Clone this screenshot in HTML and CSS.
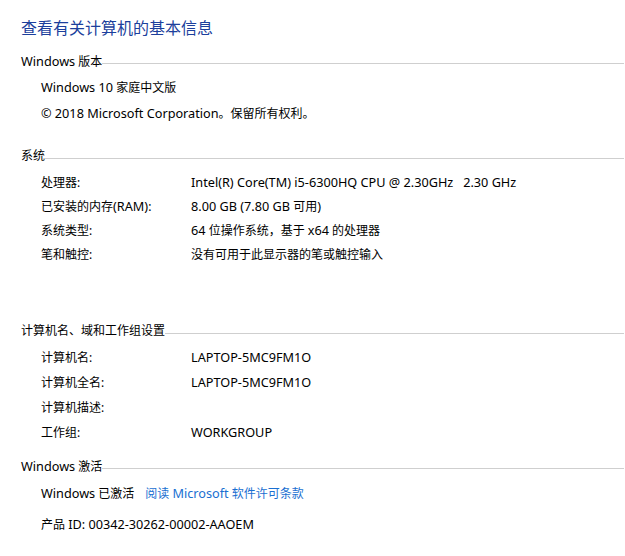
FILE: index.html
```html
<!DOCTYPE html>
<html>
<head>
	<meta charset="utf-8">
	<title>系统</title>
	<link rel="stylesheet" href="styles.css">
</head>
<body>

	<main class="sys-wrapper">
		<h1 class="sys-title">查看有关计算机的基本信息</h1>

		<section class="sys-section sec-edition">
			<div class="sec-head"><span><span class="en">Windows</span> 版本</span><i class="sec-line"></i></div>
			<div class="sec-rows">
				<div class="row"><span class="en">Windows 10</span>&nbsp;家庭中文版</div>
				<div class="row"><span class="en">© 2018 Microsoft Corporation</span>。保留所有权利。</div>
			</div>
		</section>

		<section class="sys-section sec-system">
			<div class="sec-head"><span>系统</span><i class="sec-line"></i></div>
			<div class="sec-rows">
				<div class="row"><span class="lbl">处理器:</span><span class="val en">Intel(R) Core(TM) i5-6300HQ CPU @ 2.30GHz&nbsp;&nbsp;&nbsp;2.30 GHz</span></div>
				<div class="row"><span class="lbl">已安装的内存<span class="en">(RAM)</span>:</span><span class="val"><span class="en">8.00 GB (7.80 GB</span> 可用<span class="en">)</span></span></div>
				<div class="row"><span class="lbl">系统类型:</span><span class="val"><span class="en">64</span> 位操作系统，基于 <span class="en">x64</span> 的处理器</span></div>
				<div class="row"><span class="lbl">笔和触控:</span><span class="val">没有可用于此显示器的笔或触控输入</span></div>
			</div>
		</section>

		<section class="sys-section sec-name">
			<div class="sec-head"><span>计算机名、域和工作组设置</span><i class="sec-line"></i></div>
			<div class="sec-rows">
				<div class="row"><span class="lbl">计算机名:</span><span class="val en">LAPTOP-5MC9FM1O</span></div>
				<div class="row"><span class="lbl">计算机全名:</span><span class="val en">LAPTOP-5MC9FM1O</span></div>
				<div class="row"><span class="lbl">计算机描述:</span><span class="val"></span></div>
				<div class="row"><span class="lbl">工作组:</span><span class="val en">WORKGROUP</span></div>
			</div>
		</section>

		<section class="sys-section sec-activation">
			<div class="sec-head"><span><span class="en">Windows</span> 激活</span><i class="sec-line"></i></div>
			<div class="sec-rows">
				<div class="row"><span class="en">Windows</span>&nbsp;已激活<a class="link" href="#">阅读 <span class="en">Microsoft</span> 软件许可条款</a></div>
				<div class="row row-id">产品&nbsp;<span class="en">ID: 00342-30262-00002-AAOEM</span></div>
			</div>
		</section>
	</main>

</body>
</html>
```

FILE: styles.css
```css
*{
	margin: 0;
	padding: 0;
	box-sizing: border-box;
}
body{
	background: #fff;
	color: #000;
	font-family: "Segoe UI", "Noto Sans", "Noto Sans CJK SC", sans-serif;
	font-size: 12px;
}
/* latin runs: Segoe UI is a bit wider than Noto Sans */
.en{
	font-size: 12.7px;
}
.sys-wrapper{
	padding: 17px 1px 0 21px;
}
.sys-title{
	font-size: 16px;
	font-weight: normal;
	line-height: 22px;
	color: #1c3f9c;
}
.sec-head{
	display: flex;
	align-items: center;
	height: 20px;
	line-height: 20px;
	white-space: nowrap;
}
.sec-line{
	flex: 1;
	height: 1px;
	margin-top: 4px;
	background: #cfcfcf;
}
.sec-rows{
	padding-left: 20px;
}
.row{
	display: flex;
	align-items: center;
	white-space: nowrap;
}
.lbl{
	width: 150px;
}

/* section spacing */
.sec-edition{
	margin-top: 12px;
}
.sec-edition .sec-rows{
	margin-top: 3px;
}
.sec-edition .row{
	height: 26px;
}
.sec-system{
	margin-top: 20px;
}
.sec-system .sec-rows{
	margin-top: 4px;
}
.sec-system .row{
	height: 24px;
}
.sec-name{
	margin-top: 55px;
}
.sec-name .sec-rows{
	margin-top: 3px;
}
.sec-name .row{
	height: 25px;
}
.sec-activation{
	margin-top: 12px;
}
.sec-activation .sec-rows{
	margin-top: 4px;
}
.sec-activation .row{
	height: 26px;
}
.sec-activation .row-id{
	margin-top: 5px;
}
.link{
	color: #1a6fd1;
	text-decoration: none;
	margin-left: 11px;
}
```
